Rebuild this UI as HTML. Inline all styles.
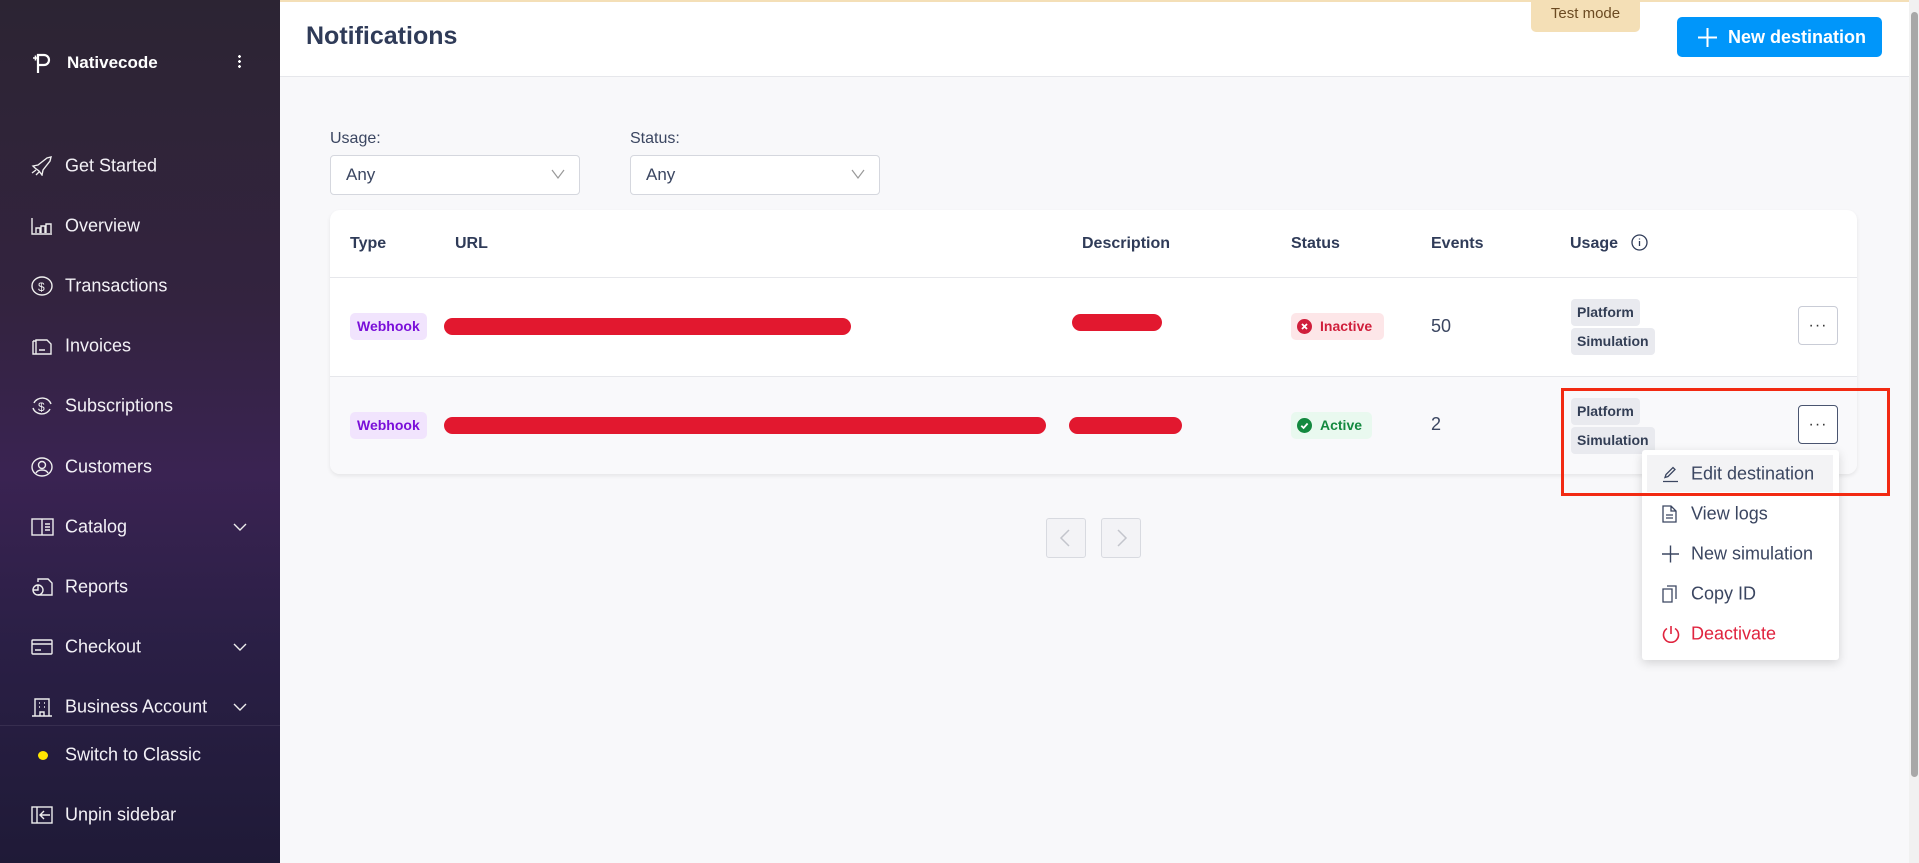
<!DOCTYPE html>
<html><head><meta charset="utf-8"><style>
*{box-sizing:border-box;margin:0;padding:0}
body{width:1919px;height:863px;overflow:hidden;font-family:"Liberation Sans",sans-serif;background:#f8f8fa;position:relative;color:#2c3a57}
.abs{position:absolute}
#sb{left:0;top:0;width:280px;height:863px;background:linear-gradient(180deg,#2c2433 0%,#33233f 35%,#3a2352 55%,#2a1f45 75%,#1f1a37 100%);color:#fff}
.it{position:absolute;left:65px;font-size:18px;color:#f3f1f6;transform:translateY(-50%)}
.ic{position:absolute;left:31px;transform:translateY(-50%)}
.chev{position:absolute;left:233px;transform:translateY(-50%)}
.th{position:absolute;top:244px;transform:translateY(-50%);font-size:16px;font-weight:bold;color:#2f3b58}
.badge{position:absolute;height:27px;border-radius:5px;font-size:14px;font-weight:bold;line-height:27px;padding:0 7px}
.scr{position:absolute;background:#e2182f;border-radius:9px;height:17px}
.tag{position:absolute;left:1571px;height:27px;background:#e9eaef;border-radius:4px;font-size:14px;font-weight:bold;line-height:27px;padding:0 6px;color:#333e55}
.dots{position:absolute;left:1798px;width:40px;height:39px;border:1px solid #c9ccd6;border-radius:4px;background:#fff;text-align:center;font-size:16px;line-height:37px;color:#333;letter-spacing:1px}
.mi{position:absolute;left:1691px;font-size:18px;color:#3b4661;transform:translateY(-50%)}
.mic{position:absolute;left:1662px;transform:translateY(-50%)}
</style></head><body>
<div id="sb" class="abs">
 <svg class="abs" style="left:32px;top:52px" width="20" height="22" viewBox="0 0 20 22" fill="none" stroke="#fff" stroke-width="2.2"><path d="M6 21V3h6a5 5 0 0 1 0 10H6"/><path d="M1 6h5M3.5 3.5v5" stroke-width="1.6"/></svg>
 <div class="abs" style="left:67px;top:53px;font-size:17px;font-weight:bold">Nativecode</div>
 <div class="abs" style="left:238px;top:54px;width:3px;height:14px;background:radial-gradient(circle,#fff 1.3px,transparent 1.5px) 0 0/3px 5px"></div>

 <svg class="ic" style="top:166px" width="22" height="20" viewBox="0 0 22 20" fill="none" stroke="#eee" stroke-width="1.4"><path d="M2 10l5-1 9-7 4-1-1 4-7 9-1 5-3-4-4-3zM1 17l4-3M5 19l3-3"/></svg><div class="it" style="top:166px">Get Started</div>
 <svg class="ic" style="top:226px" width="22" height="18" viewBox="0 0 22 18" fill="none" stroke="#eee" stroke-width="1.4"><path d="M1 1v16h20M5 16v-5h4v5M10 16v-7h4v7M15 16v-9h5v9"/></svg><div class="it" style="top:226px">Overview</div>
 <svg class="ic" style="top:286px" width="22" height="20" viewBox="0 0 22 20" fill="none" stroke="#eee" stroke-width="1.4"><ellipse cx="11" cy="10" rx="10" ry="9"/><text x="7" y="15" font-size="12" fill="#eee" stroke="none" font-family="Liberation Sans">$</text></svg><div class="it" style="top:286px">Transactions</div>
 <svg class="ic" style="top:346px" width="22" height="18" viewBox="0 0 22 18" fill="none" stroke="#eee" stroke-width="1.4"><path d="M2 4h3M2 4v13h18V7l-4-4H5v14M8 13h6"/></svg><div class="it" style="top:346px">Invoices</div>
 <svg class="ic" style="top:406px" width="22" height="20" viewBox="0 0 22 20" fill="none" stroke="#eee" stroke-width="1.4"><path d="M3 7a9 8 0 0 1 17 1M19 13a9 8 0 0 1-17-1"/><text x="7" y="15" font-size="12" fill="#eee" stroke="none" font-family="Liberation Sans">$</text></svg><div class="it" style="top:406px">Subscriptions</div>
 <svg class="ic" style="top:467px" width="22" height="20" viewBox="0 0 22 20" fill="none" stroke="#eee" stroke-width="1.4"><ellipse cx="11" cy="10" rx="10" ry="9"/><circle cx="11" cy="8" r="3.5"/><path d="M5 16c2-4 10-4 12 0"/></svg><div class="it" style="top:467px">Customers</div>
 <svg class="ic" style="top:527px" width="23" height="18" viewBox="0 0 23 18" fill="none" stroke="#eee" stroke-width="1.4"><rect x="1" y="1" width="21" height="16"/><path d="M11 1v16M14 6h5M14 9h5M14 12h5"/></svg><div class="it" style="top:527px">Catalog</div>
 <svg class="chev" style="top:527px" width="14" height="8" viewBox="0 0 14 8" fill="none" stroke="#eee" stroke-width="1.4"><path d="M1 1l6 6 6-6"/></svg>
 <svg class="ic" style="top:587px" width="22" height="20" viewBox="0 0 22 20" fill="none" stroke="#eee" stroke-width="1.4"><path d="M7 5V2h10l4 4v12H7"/><circle cx="7" cy="13" r="5"/><path d="M2 13h5V8"/></svg><div class="it" style="top:587px">Reports</div>
 <svg class="ic" style="top:647px" width="22" height="16" viewBox="0 0 22 16" fill="none" stroke="#eee" stroke-width="1.4"><rect x="1" y="1" width="20" height="14" rx="1"/><path d="M1 5h20M4 11h6"/></svg><div class="it" style="top:647px">Checkout</div>
 <svg class="chev" style="top:647px" width="14" height="8" viewBox="0 0 14 8" fill="none" stroke="#eee" stroke-width="1.4"><path d="M1 1l6 6 6-6"/></svg>
 <svg class="ic" style="top:707px" width="22" height="20" viewBox="0 0 22 20" fill="none" stroke="#eee" stroke-width="1.4"><path d="M1 19h20M4 19V2h14v17M8 6h1M13 6h1M8 10h1M13 10h1M9 19v-4h4v4"/></svg><div class="it" style="top:707px">Business Account</div>
 <svg class="chev" style="top:707px" width="14" height="8" viewBox="0 0 14 8" fill="none" stroke="#eee" stroke-width="1.4"><path d="M1 1l6 6 6-6"/></svg>
 <div class="abs" style="left:0;top:725px;width:280px;height:1px;background:rgba(255,255,255,.08)"></div>
 <div class="abs" style="left:38px;top:751px;width:10px;height:9px;border-radius:50%;background:#ffe500"></div><div class="it" style="top:755px">Switch to Classic</div>
 <svg class="ic" style="top:815px" width="22" height="18" viewBox="0 0 22 18" fill="none" stroke="#eee" stroke-width="1.4"><rect x="1" y="1" width="20" height="16"/><path d="M6 1v16M19 9h-9M13 5l-4 4 4 4"/></svg><div class="it" style="top:815px">Unpin sidebar</div>
</div>

<div class="abs" style="left:280px;top:0;width:1629px;height:77px;background:#fff;border-bottom:1px solid #e6e7eb"></div>
<div class="abs" style="left:280px;top:0;width:1629px;height:2px;background:#f4dfb7"></div>
<div class="abs" style="left:306px;top:22px;font-size:25px;font-weight:bold;color:#2f3b58">Notifications</div>
<div class="abs" style="left:1531px;top:0;width:109px;height:32px;background:#f4dfb6;border-radius:0 0 5px 5px;text-align:center;font-size:15px;line-height:28px;color:#6b4a22">Test mode</div>
<div class="abs" style="left:1677px;top:17px;width:205px;height:40px;background:#0096fa;border-radius:5px;color:#fff;font-weight:bold;font-size:18px;line-height:40px;padding-left:51px">New destination</div>
<svg class="abs" style="left:1698px;top:28px" width="19" height="19" viewBox="0 0 19 19" stroke="#fff" stroke-width="2"><path d="M9.5 0v19M0 9.5h19"/></svg>
<div class="abs" style="left:1909px;top:0;width:10px;height:863px;background:#f1f1f1"></div>
<div class="abs" style="left:1911px;top:12px;width:7px;height:765px;background:#a8a8a8;border-radius:4px"></div>

<div class="abs" style="left:330px;top:130px;font-size:16px;color:#3b4661">Usage:</div>
<div class="abs" style="left:630px;top:130px;font-size:16px;color:#3b4661">Status:</div>
<div class="abs" style="left:330px;top:155px;width:250px;height:40px;border:1px solid #d5d7de;border-radius:4px;background:#fff;font-size:17px;line-height:38px;padding-left:15px;color:#3b4661">Any</div>
<div class="abs" style="left:630px;top:155px;width:250px;height:40px;border:1px solid #d5d7de;border-radius:4px;background:#fff;font-size:17px;line-height:38px;padding-left:15px;color:#3b4661">Any</div>
<svg class="abs" style="left:551px;top:169px" width="14" height="10" viewBox="0 0 14 10" fill="none" stroke="#999" stroke-width="1.2"><path d="M1 1l6 8 6-8"/></svg>
<svg class="abs" style="left:851px;top:169px" width="14" height="10" viewBox="0 0 14 10" fill="none" stroke="#999" stroke-width="1.2"><path d="M1 1l6 8 6-8"/></svg>

<div class="abs" style="left:330px;top:210px;width:1527px;height:264px;background:#fff;border-radius:10px;box-shadow:0 2px 4px rgba(0,0,0,.08);overflow:hidden">
 <div class="abs" style="left:0;top:67px;width:100%;height:1px;background:#e6e7eb"></div>
 <div class="abs" style="left:0;top:166px;width:100%;height:98px;background:#f9f9fb;border-top:1px solid #e6e7eb"></div>
</div>
<div class="th" style="left:350px">Type</div><div class="th" style="left:455px">URL</div><div class="th" style="left:1082px">Description</div><div class="th" style="left:1291px">Status</div><div class="th" style="left:1431px">Events</div><div class="th" style="left:1570px">Usage</div>
<svg class="abs" style="left:1631px;top:234px" width="17" height="17" viewBox="0 0 17 17" fill="none" stroke="#2f3b58" stroke-width="1.3"><circle cx="8.5" cy="8.5" r="7.5"/><path d="M8.5 7v5M8.5 4.5v1"/></svg>

<div class="badge" style="left:350px;top:313px;background:#f1e4fd;color:#7a0fd9">Webhook</div>
<div class="badge" style="left:350px;top:412px;background:#f1e4fd;color:#7a0fd9">Webhook</div>
<div class="scr" style="left:444px;top:318px;width:407px"></div>
<div class="scr" style="left:1072px;top:314px;width:90px"></div>
<div class="scr" style="left:444px;top:417px;width:602px"></div>
<div class="scr" style="left:1069px;top:417px;width:113px"></div>
<div class="badge" style="left:1291px;top:313px;width:93px;background:#fde6e8;color:#d01f3c;padding-left:29px">Inactive</div>
<svg class="abs" style="left:1297px;top:319px" width="15" height="15" viewBox="0 0 15 15"><circle cx="7.5" cy="7.5" r="7.5" fill="#d01f3c"/><path d="M5 5l5 5M10 5l-5 5" stroke="#fff" stroke-width="1.8"/></svg>
<div class="badge" style="left:1291px;top:412px;width:81px;background:#e9f9ef;color:#13893f;padding-left:29px">Active</div>
<svg class="abs" style="left:1297px;top:418px" width="15" height="15" viewBox="0 0 15 15"><circle cx="7.5" cy="7.5" r="7.5" fill="#13893f"/><path d="M4.3 7.7l2.3 2.3 4-4.5" stroke="#fff" stroke-width="1.8" fill="none"/></svg>
<div class="abs" style="left:1431px;top:316px;font-size:18px;color:#3b4661">50</div>
<div class="abs" style="left:1431px;top:414px;font-size:18px;color:#3b4661">2</div>
<div class="tag" style="top:299px">Platform</div><div class="tag" style="top:328px">Simulation</div>
<div class="tag" style="top:398px">Platform</div><div class="tag" style="top:427px">Simulation</div>
<div class="dots" style="top:306px">···</div>
<div class="dots" style="top:405px;border-color:#4a5570">···</div>

<div class="abs" style="left:1046px;top:518px;width:40px;height:40px;border:1px solid #d8dae0;border-radius:3px;background:#f3f3f6"></div>
<div class="abs" style="left:1101px;top:518px;width:40px;height:40px;border:1px solid #d8dae0;border-radius:3px;background:#f3f3f6"></div>
<svg class="abs" style="left:1059px;top:529px" width="12" height="18" viewBox="0 0 12 18" fill="none" stroke="#c3c5cc" stroke-width="1.5"><path d="M10 1L2 9l8 8"/></svg>
<svg class="abs" style="left:1116px;top:529px" width="12" height="18" viewBox="0 0 12 18" fill="none" stroke="#c3c5cc" stroke-width="1.5"><path d="M2 1l8 8-8 8"/></svg>

<div class="abs" style="left:1642px;top:450px;width:197px;height:210px;background:#fff;border-radius:3px;box-shadow:0 3px 10px rgba(0,0,0,.15)"></div>
<div class="abs" style="left:1647px;top:455px;width:186px;height:37px;background:#f3f3f5"></div>
<svg class="mic" style="top:474px" width="17" height="17" viewBox="0 0 17 17" fill="none" stroke="#3b4661" stroke-width="1.3"><path d="M3 12l1-3 7-7 2 2-7 7-3 1zM1 16h15"/></svg><div class="mi" style="top:474px">Edit destination</div>
<svg class="mic" style="top:514px" width="15" height="18" viewBox="0 0 15 18" fill="none" stroke="#3b4661" stroke-width="1.3"><path d="M1 1h8l5 5v11H1zM9 1v5h5M4 10h7M4 13h7"/></svg><div class="mi" style="top:514px">View logs</div>
<svg class="mic" style="top:554px" width="17" height="17" viewBox="0 0 17 17" stroke="#3b4661" stroke-width="1.4"><path d="M8.5 0v17M0 8.5h17"/></svg><div class="mi" style="top:554px">New simulation</div>
<svg class="mic" style="top:594px" width="15" height="18" viewBox="0 0 15 18" fill="none" stroke="#3b4661" stroke-width="1.3"><path d="M5 1h9v13M1 4h9v13H1z"/></svg><div class="mi" style="top:594px">Copy ID</div>
<svg class="mic" style="top:634px" width="18" height="18" viewBox="0 0 18 18" fill="none" stroke="#e0243f" stroke-width="1.6"><path d="M5 3.5a7.5 7.5 0 1 0 8 0M9 1v8"/></svg><div class="mi" style="top:634px;color:#e0243f">Deactivate</div>

<div class="abs" style="left:1561px;top:388px;width:329px;height:108px;border:3px solid #f22a12"></div>
</body></html>
